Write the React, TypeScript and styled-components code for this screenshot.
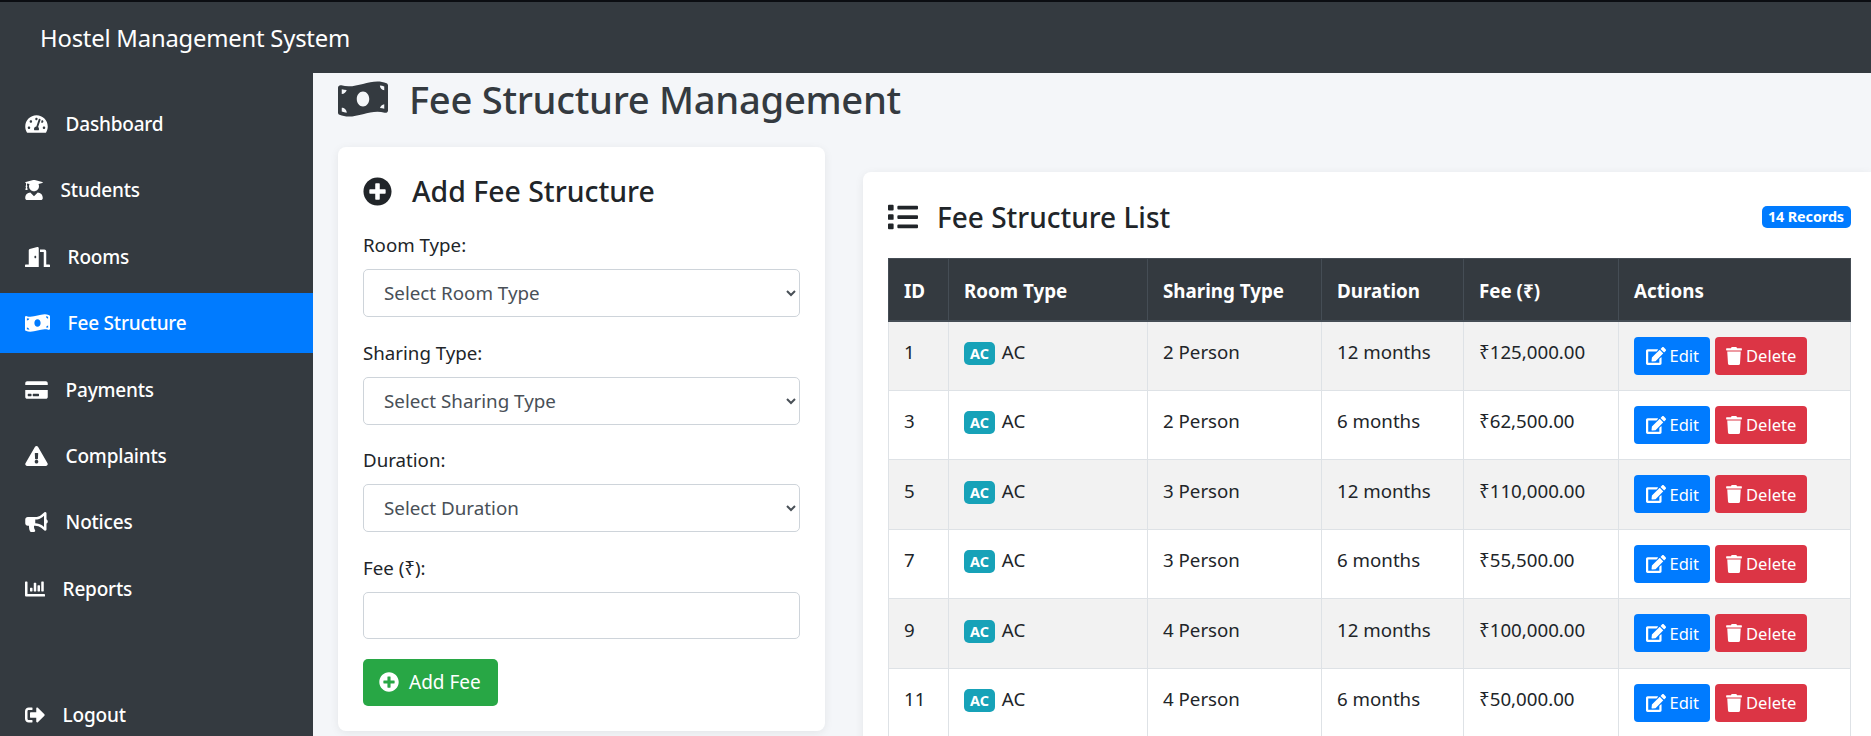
import React from "react";
import styled, { createGlobalStyle } from "styled-components";
import {
  FaBullhorn,
  FaChartBar,
  FaCreditCard,
  FaDoorOpen,
  FaEdit,
  FaExclamationTriangle,
  FaList,
  FaMoneyBillWave,
  FaPlusCircle,
  FaSignOutAlt,
  FaTachometerAlt,
  FaTrash,
  FaUserGraduate,
} from "react-icons/fa";

const GlobalStyle = createGlobalStyle`
  * { box-sizing: border-box; }
  html, body { margin: 0; height: 100%; overflow: hidden; }
  body {
    font-family: "Noto Sans", "Open Sans", "DejaVu Sans", sans-serif;
    color: #212529;
    background: #f4f6f9;
  }
`;

const navItems = [
  { label: "Dashboard", icon: FaTachometerAlt, iconWidth: 23 },
  { label: "Students", icon: FaUserGraduate, iconWidth: 18 },
  { label: "Rooms", icon: FaDoorOpen, iconWidth: 25 },
  { label: "Fee Structure", icon: FaMoneyBillWave, iconWidth: 25, active: true },
  { label: "Payments", icon: FaCreditCard, iconWidth: 23 },
  { label: "Complaints", icon: FaExclamationTriangle, iconWidth: 23 },
  { label: "Notices", icon: FaBullhorn, iconWidth: 23 },
  { label: "Reports", icon: FaChartBar, iconWidth: 20 },
];

const fees = [
  { id: 1, sharing: "2 Person", duration: "12 months", fee: "₹125,000.00" },
  { id: 3, sharing: "2 Person", duration: "6 months", fee: "₹62,500.00" },
  { id: 5, sharing: "3 Person", duration: "12 months", fee: "₹110,000.00" },
  { id: 7, sharing: "3 Person", duration: "6 months", fee: "₹55,500.00" },
  { id: 9, sharing: "4 Person", duration: "12 months", fee: "₹100,000.00" },
  { id: 11, sharing: "4 Person", duration: "6 months", fee: "₹50,000.00" },
];

const App = () => {
  return (
    <Page>
      <GlobalStyle />
      <TopBar>
        <Brand>Hostel Management System</Brand>
      </TopBar>
      <Body>
        <Sidebar>
          {navItems.map((item) => (
            <NavItem key={item.label} $active={item.active} $iconWidth={item.iconWidth}>
              <item.icon />
              <span>{item.label}</span>
            </NavItem>
          ))}
          <LogoutItem $iconWidth={20}>
            <FaSignOutAlt />
            <span>Logout</span>
          </LogoutItem>
        </Sidebar>
        <Main>
          <PageTitle>
            <FaMoneyBillWave />
            Fee Structure Management
          </PageTitle>
          <Columns>
            <FormCard>
              <FormTitle>
                <FaPlusCircle />
                Add Fee Structure
              </FormTitle>
              <Field>
                <Label>Room Type:</Label>
                <Select defaultValue="">
                  <option value="">Select Room Type</option>
                </Select>
              </Field>
              <Field>
                <Label>Sharing Type:</Label>
                <Select defaultValue="">
                  <option value="">Select Sharing Type</option>
                </Select>
              </Field>
              <Field>
                <Label>Duration:</Label>
                <Select defaultValue="">
                  <option value="">Select Duration</option>
                </Select>
              </Field>
              <LastField>
                <Label>Fee (₹):</Label>
                <Input type="text" />
              </LastField>
              <AddButton>
                <FaPlusCircle />
                Add Fee
              </AddButton>
            </FormCard>
            <ListCard>
              <ListHeader>
                <ListTitle>
                  <FaList />
                  Fee Structure List
                </ListTitle>
                <RecordBadge>14 Records</RecordBadge>
              </ListHeader>
              <Table>
                <colgroup>
                  <col style={{ width: 60 }} />
                  <col style={{ width: 199 }} />
                  <col style={{ width: 174 }} />
                  <col style={{ width: 142 }} />
                  <col style={{ width: 155 }} />
                  <col />
                </colgroup>
                <thead>
                  <tr>
                    <Th>ID</Th>
                    <Th>Room Type</Th>
                    <Th>Sharing Type</Th>
                    <Th>Duration</Th>
                    <Th>Fee (₹)</Th>
                    <Th>Actions</Th>
                  </tr>
                </thead>
                <tbody>
                  {fees.map((row) => (
                    <Row key={row.id}>
                      <Td>{row.id}</Td>
                      <Td>
                        <TypeBadge>AC</TypeBadge> AC
                      </Td>
                      <Td>{row.sharing}</Td>
                      <Td>{row.duration}</Td>
                      <Td>{row.fee}</Td>
                      <ActionCell>
                        <ActionButton $color="#007bff" $iconWidth={20}>
                          <FaEdit />
                          Edit
                        </ActionButton>
                        <ActionButton $color="#dc3545" $iconWidth={16}>
                          <FaTrash />
                          Delete
                        </ActionButton>
                      </ActionCell>
                    </Row>
                  ))}
                </tbody>
              </Table>
            </ListCard>
          </Columns>
        </Main>
      </Body>
    </Page>
  );
};

const Page = styled.div`
  display: flex;
  flex-direction: column;
  height: 100vh;
  overflow: hidden;
`;
const TopBar = styled.header`
  flex: 0 0 73px;
  display: flex;
  align-items: center;
  padding: 1px 0 0 40px;
  background: #343a40;
  border-top: 2px solid #0b0d12;
`;
const Brand = styled.div`
  color: #fff;
  font-size: 23.8px;
  letter-spacing: -0.2px;
`;
const Body = styled.div`
  flex: 1;
  display: flex;
  min-height: 0;
`;
const Sidebar = styled.nav`
  flex: 0 0 313px;
  display: flex;
  flex-direction: column;
  gap: 6.4px;
  padding: 21px 0 0;
  background: #343a40;
`;
const NavItem = styled.div<{ $active?: boolean; $iconWidth: number }>`
  display: flex;
  align-items: center;
  gap: 17.6px;
  height: 60px;
  padding-left: 25px;
  color: #fff;
  font-size: 19px;
  font-weight: 500;
  letter-spacing: -0.2px;
  background: ${(p) => (p.$active ? "#007bff" : "transparent")};
  svg {
    height: 20px;
    width: ${(p) => p.$iconWidth}px;
  }
`;
const LogoutItem = styled(NavItem)`
  margin-top: auto;
  margin-bottom: -9px;
`;
const Main = styled.main`
  flex: 1;
  min-width: 0;
  padding: 0 0 0 25px;
`;
const PageTitle = styled.h1`
  display: flex;
  align-items: center;
  gap: 21px;
  height: 74px;
  margin: 0;
  padding-bottom: 22px;
  color: #343a40;
  font-size: 38.2px;
  font-weight: 500;
  letter-spacing: -0.3px;
  svg {
    height: 40px;
    width: 50px;
  }
`;
const Columns = styled.div`
  display: flex;
  align-items: flex-start;
  gap: 38px;
`;
const FormCard = styled.section`
  flex: 0 0 487px;
  padding: 25px;
  background: #fff;
  border-radius: 8px;
  box-shadow: 0 2px 10px rgba(0, 0, 0, 0.07);
`;
const FormTitle = styled.h3`
  display: flex;
  align-items: center;
  gap: 20px;
  margin: 0 0 21px;
  font-size: 28.4px;
  font-weight: 500;
  line-height: 38px;
  svg {
    height: 29px;
    width: 29px;
  }
`;
const Field = styled.div`
  margin-bottom: 21.5px;
`;
const LastField = styled.div`
  margin-bottom: 20px;
`;
const Label = styled.label`
  display: block;
  margin-bottom: 10px;
  font-size: 18.7px;
  line-height: 28px;
`;
const Select = styled.select`
  display: block;
  width: 100%;
  height: 48px;
  padding: 0 16px;
  color: #495057;
  font-family: inherit;
  font-size: 18.8px;
  background: #fff;
  border: 1px solid #ced4da;
  border-radius: 5px;
`;
const Input = styled.input`
  display: block;
  width: 100%;
  height: 47px;
  padding: 0 16px;
  background: #fff;
  border: 1px solid #ced4da;
  border-radius: 5px;
`;
const AddButton = styled.button`
  display: flex;
  align-items: center;
  gap: 10px;
  height: 47px;
  padding: 0 17px 0 16px;
  color: #fff;
  font-family: inherit;
  font-size: 19px;
  background: #28a745;
  border: none;
  border-radius: 5px;
  svg {
    height: 20px;
    width: 20px;
  }
`;
const ListCard = styled.section`
  flex: 1;
  min-width: 0;
  margin-top: 25px;
  padding: 25px 20px 25px 25px;
  background: #fff;
  border-radius: 8px 0 0 8px;
  box-shadow: 0 2px 10px rgba(0, 0, 0, 0.07);
`;
const ListHeader = styled.div`
  display: flex;
  align-items: center;
  justify-content: space-between;
  height: 40px;
  margin-bottom: 21px;
`;
const ListTitle = styled.h3`
  display: flex;
  align-items: center;
  gap: 19px;
  margin: 0;
  font-size: 28px;
  font-weight: 500;
  svg {
    height: 30px;
    width: 30px;
  }
`;
const RecordBadge = styled.span`
  padding: 2px 7px 2px 6px;
  color: #fff;
  font-size: 14.4px;
  font-weight: 700;
  line-height: 18px;
  letter-spacing: -0.1px;
  background: #007bff;
  border-radius: 5px;
`;
const Table = styled.table`
  width: 963px;
  table-layout: fixed;
  border-collapse: collapse;
  font-size: 18.7px;
`;
const Th = styled.th`
  height: 62px;
  padding: 3px 15px 0;
  color: #fff;
  font-weight: 700;
  font-size: 18.8px;
  text-align: left;
  background: #343a40;
  border: 1px solid #454d55;
  border-bottom-width: 2px;
`;
const Row = styled.tr`
  &:nth-child(odd) {
    background: #f2f2f2;
  }
`;
const Td = styled.td`
  height: 69.5px;
  padding: 16.5px 15px 0;
  vertical-align: top;
  line-height: 28px;
  border: 1px solid #dee2e6;
`;
const ActionCell = styled(Td)`
  padding-top: 15px;
  white-space: nowrap;
`;
const TypeBadge = styled.span`
  display: inline-block;
  width: 31px;
  height: 23px;
  margin-right: 2px;
  color: #fff;
  font-size: 14.4px;
  font-weight: 700;
  line-height: 23px;
  text-align: center;
  background: #17a2b8;
  border-radius: 5px;
`;
const ActionButton = styled.button<{ $color: string; $iconWidth: number }>`
  display: inline-flex;
  align-items: center;
  gap: 4px;
  height: 38px;
  margin-right: 5px;
  padding: 0 10.5px 0 11.5px;
  color: #fff;
  font-family: inherit;
  font-size: 16.5px;
  background: ${(p) => p.$color};
  border: none;
  border-radius: 4px;
  vertical-align: top;
  svg {
    height: 18px;
    width: ${(p) => p.$iconWidth}px;
  }
`;

export default App;
